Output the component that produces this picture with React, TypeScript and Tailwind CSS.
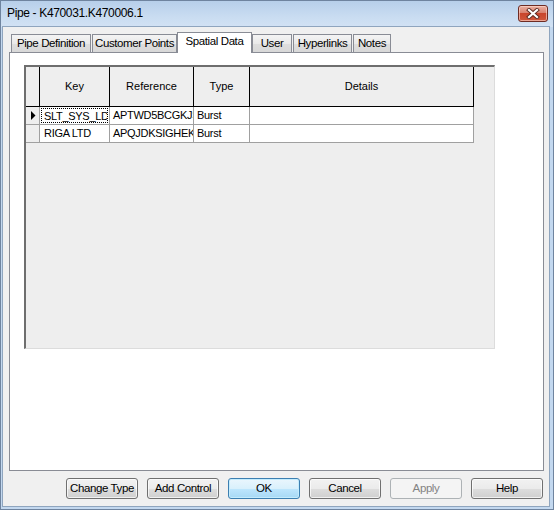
import React from "react";

const FONT = "font-['Liberation_Sans',Arial,sans-serif]";

function CloseButton() {
  return (
    <div className="w-[30px] h-[17px] rounded-[3px] border border-[#6e2c24] bg-[linear-gradient(#eab0a2,#d98270_45%,#c9452c_50%,#d0583d)] shadow-[inset_0_0_0_1px_rgba(255,220,210,0.6)] flex items-center justify-center">
      <svg width="14" height="11" viewBox="0 0 14 11">
        <path d="M3 2 L11 9 M11 2 L3 9" stroke="#5a2a22" strokeWidth="4" strokeLinecap="square" />
        <path d="M3 2 L11 9 M11 2 L3 9" stroke="#ffffff" strokeWidth="2.2" strokeLinecap="square" />
      </svg>
    </div>
  );
}

function Tab({ label, className }: { label: string; className: string }) {
  return (
    <div
      className={`h-[18px] border border-b-0 border-[#898c95] bg-[linear-gradient(#f4f4f4,#e9e9e9_50%,#dedede_51%,#d8d8d8)] flex items-center justify-center text-[11.5px] tracking-[-0.4px] text-black pt-[1px] whitespace-nowrap ${className}`}
    >
      {label}
    </div>
  );
}

function Button({ label, kind }: { label: string; kind?: "default" | "disabled" }) {
  let cls =
    "border-[#707070] bg-[linear-gradient(#f2f2f2,#ebebeb_50%,#dddddd_51%,#cfcfcf)] shadow-[inset_0_0_0_1px_rgba(255,255,255,0.7)] text-black";
  if (kind === "default")
    cls =
      "border-[#3c7fb1] bg-[linear-gradient(#eaf6fd,#d9f0fc_50%,#bee6fd_51%,#a7d9f5)] shadow-[inset_0_0_0_1px_#c4ecfd] text-black";
  if (kind === "disabled") cls = "border-[#adb2b5] bg-[#f4f4f4] text-[#838383]";
  return (
    <div
      className={`w-[72px] h-[21px] rounded-[3px] border flex items-center justify-center text-[11.5px] tracking-[-0.4px] whitespace-nowrap ${cls}`}
    >
      {label}
    </div>
  );
}

export default function App() {
  return (
    <div
      className={`${FONT} w-[554px] h-[510px] border border-[#6f849f] bg-[#c3d8ef] flex flex-col overflow-hidden`}
    >
      {/* title bar */}
      <div className="h-[26px] shrink-0 bg-[linear-gradient(#b7cfea,#c9dcf1_60%,#d2e2f4)] flex items-start pl-[6px] pr-[5px]">
        <div className="flex-1 text-[12px] tracking-[-0.35px] text-black leading-[24px]">Pipe - K470031.K470006.1</div>
        <div className="pt-[4px]">
          <CloseButton />
        </div>
      </div>

      {/* client area */}
      <div className="flex-1 ml-[2px] mr-[4px] mb-[3px] bg-[#f0f0f0] shadow-[0_0_0_1px_#8fa5be] flex flex-col pt-[5px]">
        {/* tabs */}
        <div className="ml-[6px] h-[20px] flex items-end pl-[2px] text-black">
          <Tab label="Pipe Definition" className="w-[80px]" />
          <Tab label="Customer Points" className="w-[85px] ml-[1px]" />
          <div className="relative z-10 -mb-px h-[21px] w-[75px] border border-b-0 border-[#898c95] bg-white flex items-center justify-center text-[11.5px] tracking-[-0.4px] pb-[2px] whitespace-nowrap">
            Spatial Data
          </div>
          <Tab label="User" className="w-[40px]" />
          <Tab label="Hyperlinks" className="w-[59px] ml-[1px]" />
          <Tab label="Notes" className="w-[38px] ml-[1px]" />
        </div>

        {/* tab panel */}
        <div className="ml-[6px] w-[535px] h-[419px] border border-[#898c95] bg-white pt-[12px] pl-[14px]">
          {/* grid */}
          <div className="w-[471px] h-[284px] bg-[#eeeeee] border-l-2 border-t-2 border-l-[#6e6e6e] border-t-[#6e6e6e] border-r border-b border-r-[#dcdcdc] border-b-[#dcdcdc] text-[11px] text-black">
            {/* header */}
            <div className="flex h-[40px]">
              <div className="w-[14px] border-r border-b border-black" />
              <div className="w-[70px] border-r border-b border-black flex items-center justify-center">Key</div>
              <div className="w-[84px] border-r border-b border-black flex items-center justify-center">Reference</div>
              <div className="w-[56px] border-r border-b border-black flex items-center justify-center">Type</div>
              <div className="w-[224px] border-r border-b border-black flex items-center justify-center">Details</div>
            </div>
            {/* row 1 */}
            <div className="flex h-[18px] tracking-[-0.3px]">
              <div className="w-[14px] border-r border-b border-[#a0a0a0] flex items-center justify-center pl-[1px]">
                <svg width="5" height="9" viewBox="0 0 5 9">
                  <path d="M0 0 L4.5 4.5 L0 9 Z" fill="#000" />
                </svg>
              </div>
              <div className="w-[70px] border-r border-b border-[#a0a0a0] bg-white p-[1px] overflow-hidden">
                <div className="h-full border border-dotted border-black pl-[2px] overflow-hidden whitespace-nowrap leading-[14px]">
                  SLT_SYS_LD
                </div>
              </div>
              <div className="w-[84px] border-r border-b border-[#a0a0a0] bg-white pl-[3px] overflow-hidden whitespace-nowrap leading-[17px]">
                APTWD5BCGKJS
              </div>
              <div className="w-[56px] border-r border-b border-[#a0a0a0] bg-white pl-[3px] leading-[17px] overflow-hidden">Burst</div>
              <div className="w-[224px] border-r border-b border-[#a0a0a0] bg-white" />
            </div>
            {/* row 2 */}
            <div className="flex h-[18px] tracking-[-0.3px]">
              <div className="w-[14px] border-r border-b border-[#a0a0a0]" />
              <div className="w-[70px] border-r border-b border-[#a0a0a0] bg-white pl-[4px] overflow-hidden whitespace-nowrap leading-[17px]">
                RIGA LTD
              </div>
              <div className="w-[84px] border-r border-b border-[#a0a0a0] bg-white pl-[3px] overflow-hidden whitespace-nowrap leading-[17px]">
                APQJDKSIGHEK
              </div>
              <div className="w-[56px] border-r border-b border-[#a0a0a0] bg-white pl-[3px] leading-[17px] overflow-hidden">Burst</div>
              <div className="w-[224px] border-r border-b border-[#a0a0a0] bg-white" />
            </div>
          </div>
        </div>

        {/* buttons */}
        <div className="mt-[7px] flex justify-end gap-[9px] pr-[6px]">
          <Button label="Change Type" />
          <Button label="Add Control" />
          <Button label="OK" kind="default" />
          <Button label="Cancel" />
          <Button label="Apply" kind="disabled" />
          <Button label="Help" />
        </div>
      </div>
    </div>
  );
}
